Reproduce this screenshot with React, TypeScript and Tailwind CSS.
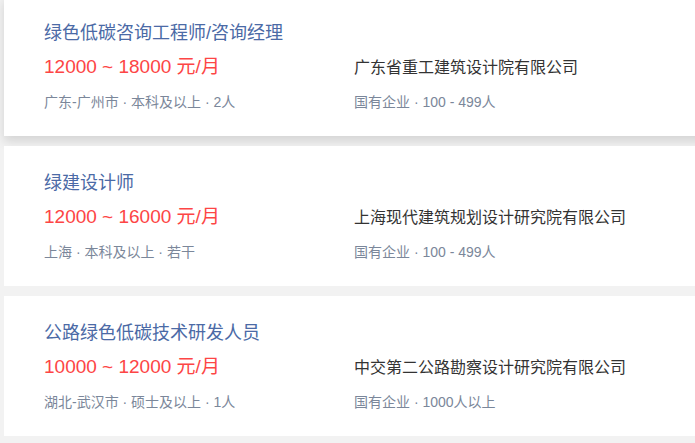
import React from "react";

type Job = {
  title: string;
  salary: string;
  meta: string;
  company: string;
  companyMeta: string;
};

const jobs: Job[] = [
  {
    title: "绿色低碳咨询工程师/咨询经理",
    salary: "12000 ~ 18000 元/月",
    meta: "广东-广州市 · 本科及以上 · 2人",
    company: "广东省重工建筑设计院有限公司",
    companyMeta: "国有企业 · 100 - 499人",
  },
  {
    title: "绿建设计师",
    salary: "12000 ~ 16000 元/月",
    meta: "上海 · 本科及以上 · 若干",
    company: "上海现代建筑规划设计研究院有限公司",
    companyMeta: "国有企业 · 100 - 499人",
  },
  {
    title: "公路绿色低碳技术研发人员",
    salary: "10000 ~ 12000 元/月",
    meta: "湖北-武汉市 · 硕士及以上 · 1人",
    company: "中交第二公路勘察设计研究院有限公司",
    companyMeta: "国有企业 · 1000人以上",
  },
];

const JobCard = ({ job, active }: { job: Job; active?: boolean }) => (
  <div
    className={`h-[140px] bg-white pl-10 pt-[25px] flex w-[720px] ${
      active ? "shadow-[0_5px_10px_rgba(0,0,0,0.13)]" : ""
    }`}
  >
    <div className="w-[310px] shrink-0">
      <h3 className="text-[18px] leading-6 text-[#4b6aa6] whitespace-nowrap">{job.title}</h3>
      <p className="mt-[10px] text-[19px] leading-6 text-[#fd4545] whitespace-nowrap">
        {job.salary}
      </p>
      <p className="mt-[13px] text-[14px] leading-5 text-[#7b879a] whitespace-nowrap">
        {job.meta}
      </p>
    </div>
    <div className="pt-[35px]">
      <p className="text-[16px] leading-6 text-[#333333] whitespace-nowrap">{job.company}</p>
      <p className="mt-[12px] text-[14px] leading-5 text-[#7b879a] whitespace-nowrap">
        {job.companyMeta}
      </p>
    </div>
  </div>
);

export default function App() {
  return (
    <div
      className="h-[443px] overflow-hidden bg-[#f2f2f2] pl-1"
      style={{ fontFamily: '"Liberation Sans", "Noto Sans CJK SC", sans-serif' }}
    >
      <div className="-mt-1 flex flex-col gap-[10px]">
        {jobs.map((job, i) => (
          <JobCard key={i} job={job} active={i === 0} />
        ))}
      </div>
    </div>
  );
}
